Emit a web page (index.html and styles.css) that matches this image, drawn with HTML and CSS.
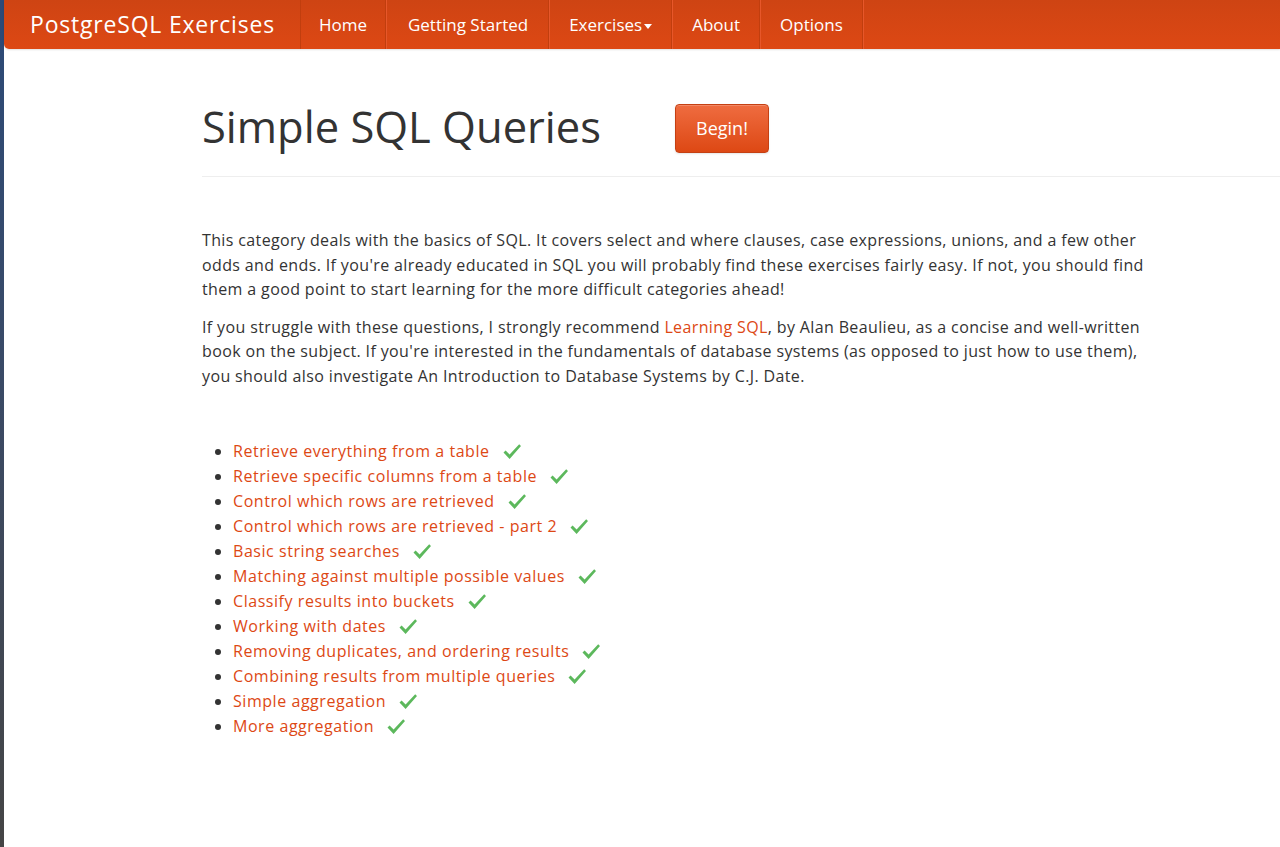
FILE: index.html
```html
<!DOCTYPE html>
<html lang="en">
<head>
<meta charset="utf-8">
<title>Simple SQL Queries</title>
<link rel="stylesheet" href="styles.css">
</head>
<body>
<div class="desk"></div>
<div class="page">
  <nav class="navbar">
    <a class="brand" href="#">PostgreSQL Exercises</a>
    <ul class="nav">
      <li><a href="#">Home</a></li>
      <li><a class="wide" href="#">Getting Started</a></li>
      <li><a href="#">Exercises<span class="caret"></span></a></li>
      <li><a href="#">About</a></li>
      <li><a href="#">Options</a></li>
    </ul>
  </nav>
  <main class="content">
    <header class="page-header">
      <h1>Simple SQL Queries</h1>
      <a class="btn" href="#">Begin!</a>
    </header>
    <section class="intro">
      <p>This category deals with the basics of SQL. It covers select and where clauses, case expressions, unions, and a few other odds and ends. If you're already educated in SQL you will probably find these exercises fairly easy. If not, you should find them a good point to start learning for the more difficult categories ahead!</p>
      <p>If you struggle with these questions, I strongly recommend <a href="#">Learning SQL</a>, by Alan Beaulieu, as a concise and well-written book on the subject. If you're interested in the fundamentals of database systems (as opposed to just how to use them), you should also investigate An Introduction to Database Systems by C.J. Date.</p>
    </section>
    <ul class="exercises">
      <li><a href="#">Retrieve everything from a table</a><svg class="ok" viewBox="0 0 20 18"><path d="M1.5 9.5 L3.6 7.6 L7.6 11.6 L17.2 1.2 L19 3 L7.6 16 Z"/></svg></li>
      <li><a href="#">Retrieve specific columns from a table</a><svg class="ok" viewBox="0 0 20 18"><path d="M1.5 9.5 L3.6 7.6 L7.6 11.6 L17.2 1.2 L19 3 L7.6 16 Z"/></svg></li>
      <li><a href="#">Control which rows are retrieved</a><svg class="ok" viewBox="0 0 20 18"><path d="M1.5 9.5 L3.6 7.6 L7.6 11.6 L17.2 1.2 L19 3 L7.6 16 Z"/></svg></li>
      <li><a href="#">Control which rows are retrieved - part 2</a><svg class="ok" viewBox="0 0 20 18"><path d="M1.5 9.5 L3.6 7.6 L7.6 11.6 L17.2 1.2 L19 3 L7.6 16 Z"/></svg></li>
      <li><a href="#">Basic string searches</a><svg class="ok" viewBox="0 0 20 18"><path d="M1.5 9.5 L3.6 7.6 L7.6 11.6 L17.2 1.2 L19 3 L7.6 16 Z"/></svg></li>
      <li><a href="#">Matching against multiple possible values</a><svg class="ok" viewBox="0 0 20 18"><path d="M1.5 9.5 L3.6 7.6 L7.6 11.6 L17.2 1.2 L19 3 L7.6 16 Z"/></svg></li>
      <li><a href="#">Classify results into buckets</a><svg class="ok" viewBox="0 0 20 18"><path d="M1.5 9.5 L3.6 7.6 L7.6 11.6 L17.2 1.2 L19 3 L7.6 16 Z"/></svg></li>
      <li><a href="#">Working with dates</a><svg class="ok" viewBox="0 0 20 18"><path d="M1.5 9.5 L3.6 7.6 L7.6 11.6 L17.2 1.2 L19 3 L7.6 16 Z"/></svg></li>
      <li><a href="#">Removing duplicates, and ordering results</a><svg class="ok" viewBox="0 0 20 18"><path d="M1.5 9.5 L3.6 7.6 L7.6 11.6 L17.2 1.2 L19 3 L7.6 16 Z"/></svg></li>
      <li><a href="#">Combining results from multiple queries</a><svg class="ok" viewBox="0 0 20 18"><path d="M1.5 9.5 L3.6 7.6 L7.6 11.6 L17.2 1.2 L19 3 L7.6 16 Z"/></svg></li>
      <li><a href="#">Simple aggregation</a><svg class="ok" viewBox="0 0 20 18"><path d="M1.5 9.5 L3.6 7.6 L7.6 11.6 L17.2 1.2 L19 3 L7.6 16 Z"/></svg></li>
      <li><a href="#">More aggregation</a><svg class="ok" viewBox="0 0 20 18"><path d="M1.5 9.5 L3.6 7.6 L7.6 11.6 L17.2 1.2 L19 3 L7.6 16 Z"/></svg></li>
    </ul>
  </main>
</div>
</body>
</html>
```
FILE: styles.css
```css
html, body {
  margin: 0;
  padding: 0;
  height: 100%;
}
body {
  display: flex;
  font-family: "Open Sans", "Noto Sans", sans-serif;
  font-size: 16px;
  color: #333333;
  background: #ffffff;
  overflow: hidden;
}
.desk {
  width: 4px;
  flex: none;
  background: linear-gradient(to bottom, #2c4a78 0%, #3a4a66 45%, #454545 100%);
}
.page {
  flex: 1;
  min-width: 0;
}
a {
  text-decoration: none;
  color: #dd4814;
}
.navbar {
  display: flex;
  align-items: stretch;
  height: 49px;
  background: linear-gradient(to bottom, #ce4413, #dd4814);
  border-bottom-left-radius: 5px;
  box-shadow: 0 1px 2px rgba(0,0,0,0.12);
}
.brand {
  color: #ffffff;
  font-size: 23px;
  letter-spacing: 0.8px;
  line-height: 49px;
  padding: 0 25px 0 26px;
  white-space: nowrap;
}
.nav {
  display: flex;
  margin: 0;
  padding: 0;
  list-style: none;
  border-left: 1px solid #c13e0e;
  border-right: 1px solid #e7572a;
}
.nav li {
  display: flex;
  border-left: 1px solid #e7572a;
  border-right: 1px solid #c13e0e;
}
.nav li:first-child {
  border-left: none;
}
.nav a {
  color: #ffffff;
  font-size: 17px;
  line-height: 49px;
  padding: 0 19px;
  white-space: nowrap;
}
.nav li:first-child a {
  padding: 0 18px;
}
.nav a.wide {
  padding: 0 20px 0 21px;
}
.caret {
  display: inline-block;
  width: 0;
  height: 0;
  margin-left: 2px;
  vertical-align: middle;
  border-top: 5px solid #ffffff;
  border-left: 4px solid transparent;
  border-right: 4px solid transparent;
}
.content {
  padding-left: 198px;
}
.page-header {
  display: flex;
  align-items: center;
  margin-top: 55px;
  padding-bottom: 23px;
  border-bottom: 1px solid #eeeeee;
}
.page-header h1 {
  margin: -4px 0 0 0;
  font-size: 43.5px;
  font-weight: 400;
  line-height: 52px;
  color: #333333;
}
.btn {
  margin-left: 74px;
  display: inline-block;
  width: 94px;
  height: 49px;
  line-height: 47px;
  text-align: center;
  box-sizing: border-box;
  color: #ffffff;
  font-size: 18px;
  border-radius: 4px;
  border: 1px solid #c54013;
  background: linear-gradient(to bottom, #ef6c40, #dd4814);
  box-shadow: inset 0 1px 0 rgba(255,255,255,0.2), 0 1px 2px rgba(0,0,0,0.1);
}
.intro {
  width: 960px;
  margin-top: 51px;
  letter-spacing: 0.37px;
}
.intro p {
  margin: 0 0 13px 0;
  line-height: 24.5px;
}
.exercises {
  margin: 51px 0 0 0;
  padding-left: 31px;
}
.exercises li {
  line-height: 25px;
  font-size: 16px;
  letter-spacing: 0.55px;
}
.ok {
  width: 20px;
  height: 18px;
  margin-left: 12px;
  vertical-align: -4px;
  fill: #5cb85c;
}
```
